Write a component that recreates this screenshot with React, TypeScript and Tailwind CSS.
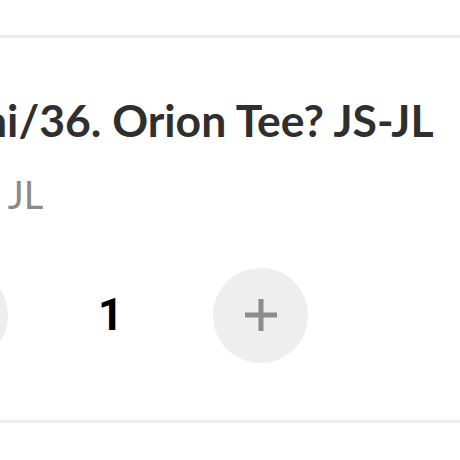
export default function App() {
  return (
    <div className="w-[460px] h-[460px] overflow-hidden bg-white pt-[35px] font-['Lato',sans-serif]">
      {/* Cart item row */}
      <div className="border-y-[3px] border-[#ededed] pt-[60px] pb-[57px]">
        <div className="whitespace-nowrap">
          <h2 className="ml-[-18px] text-[44.5px] leading-none font-bold text-[#2f2f2f]">
            ni/36. Orion Tee? JS-JL
          </h2>
          <p className="mt-[32px] ml-[-21px] text-[38px] leading-none text-[#8a8a8a]">
            e JL
          </p>
        </div>

        {/* Quantity stepper */}
        <div className="mt-[55px] ml-[-87px] flex items-center">
          <button className="w-[95px] h-[95px] rounded-full bg-[#eeeeee] flex items-center justify-center shrink-0">
            <svg width="32" height="32" viewBox="0 0 32 32">
              <path d="M0 16h32" stroke="#8c8c8c" strokeWidth="5" />
            </svg>
          </button>
          <div className="w-[205px] shrink-0 text-center font-['Roboto',sans-serif] font-bold text-[44px] leading-none text-black">
            1
          </div>
          <button className="w-[95px] h-[95px] rounded-full bg-[#eeeeee] flex items-center justify-center shrink-0">
            <svg width="32" height="32" viewBox="0 0 32 32">
              <path d="M0 16h32M16 0v32" stroke="#8c8c8c" strokeWidth="5" />
            </svg>
          </button>
        </div>
      </div>
    </div>
  )
}
